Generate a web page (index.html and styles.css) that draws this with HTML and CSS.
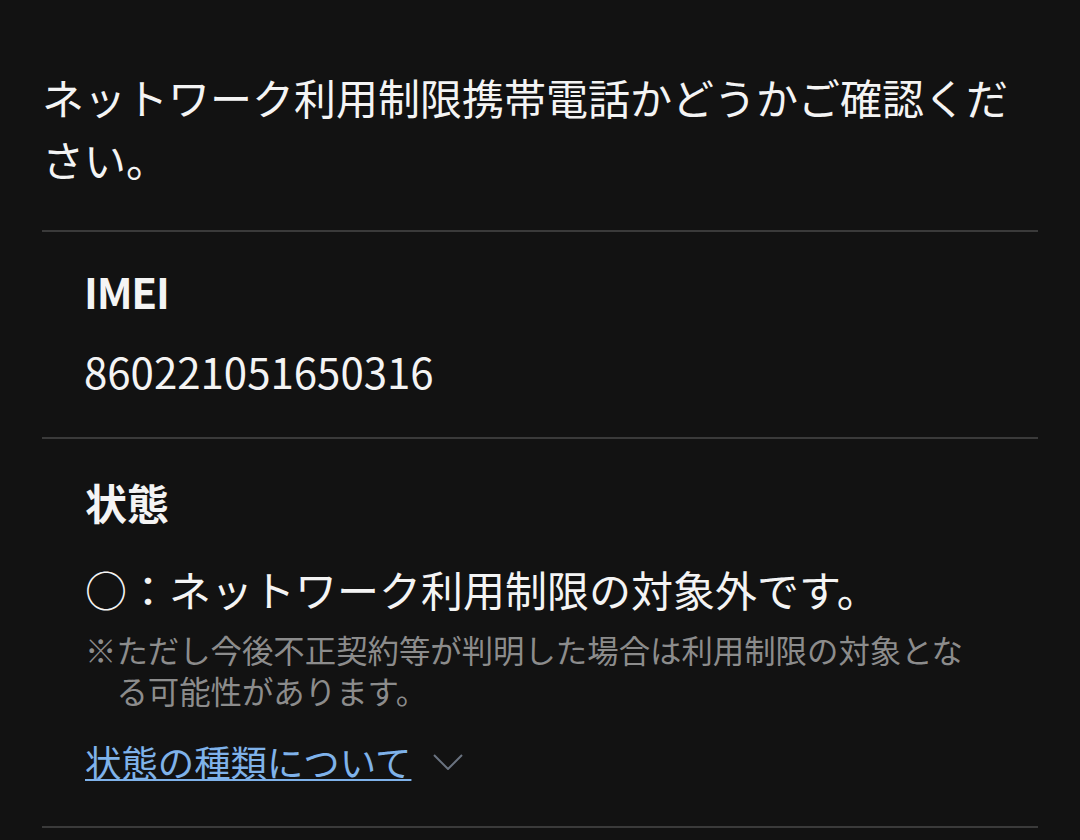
FILE: index.html
```html
<!DOCTYPE html>
<html lang="ja">
<head>
<meta charset="utf-8">
<title>ネットワーク利用制限</title>
<link rel="stylesheet" href="styles.css">
</head>
<body>
<main class="page">
  <p class="intro">ネットワーク利用制限携帯電話かどうかご確認ください。</p>
  <section class="item item-imei">
    <h2 class="label label-latin">IMEI</h2>
    <p class="value">860221051650316</p>
  </section>
  <section class="item item-status">
    <h2 class="label">状態</h2>
    <p class="value">○：ネットワーク利用制限の対象外です。</p>
    <p class="note">※ただし今後不正契約等が判明した場合は利用制限の対象となる可能性があります。</p>
    <div class="more">
      <a class="more-link" href="#">状態の種類について</a>
      <svg class="chevron" width="30" height="16" viewBox="0 0 30 16" aria-hidden="true">
        <path d="M1 1 L15 15 L29 1" fill="none" stroke="#6a7380" stroke-width="2"/>
      </svg>
    </div>
  </section>
</main>
</body>
</html>
```

FILE: styles.css
```css
html, body {
  margin: 0;
  padding: 0;
  background: #121212;
}

body {
  font-family: "Noto Sans CJK JP", "Noto Sans", sans-serif;
  color: #f4f4f4;
}

.page {
  padding: 66px 42px 0 42px;
}

.intro {
  margin: 0;
  padding: 0 0 40px 0;
  font-size: 42px;
  line-height: 62px;
  font-weight: 400;
  border-bottom: 2px solid #3a3a3a;
}

.item {
  padding: 28px 43px 35px 43px;
  border-bottom: 2px solid #3a3a3a;
}

.item-status {
  padding-top: 32px;
  padding-bottom: 40px;
}

.label {
  margin: 0;
  font-size: 42px;
  line-height: 62px;
  font-weight: 700;
}

.label-latin {
  letter-spacing: -1.2px;
  margin-left: -1px;
}

.value {
  margin: 18px 0 0 0;
  font-size: 42px;
  line-height: 62px;
  font-weight: 400;
}

.item-imei .value {
  margin-left: -1px;
}

.item-status .value {
  margin-top: 25px;
}

.note {
  margin: 9px 0 0 0;
  padding-left: 1em;
  padding-right: 20px;
  text-indent: -1em;
  font-size: 31.4px;
  line-height: 41px;
  color: #8c8c8c;
}

.more {
  display: flex;
  align-items: center;
  gap: 22px;
  margin-top: 25px;
  height: 50px;
}

.more-link {
  font-size: 36.4px;
  line-height: 50px;
  color: #7fb2ea;
  text-decoration: underline;
  text-decoration-thickness: 2px;
  text-underline-offset: 2px;
}

.chevron {
  display: block;
  margin-top: 2px;
}
```
